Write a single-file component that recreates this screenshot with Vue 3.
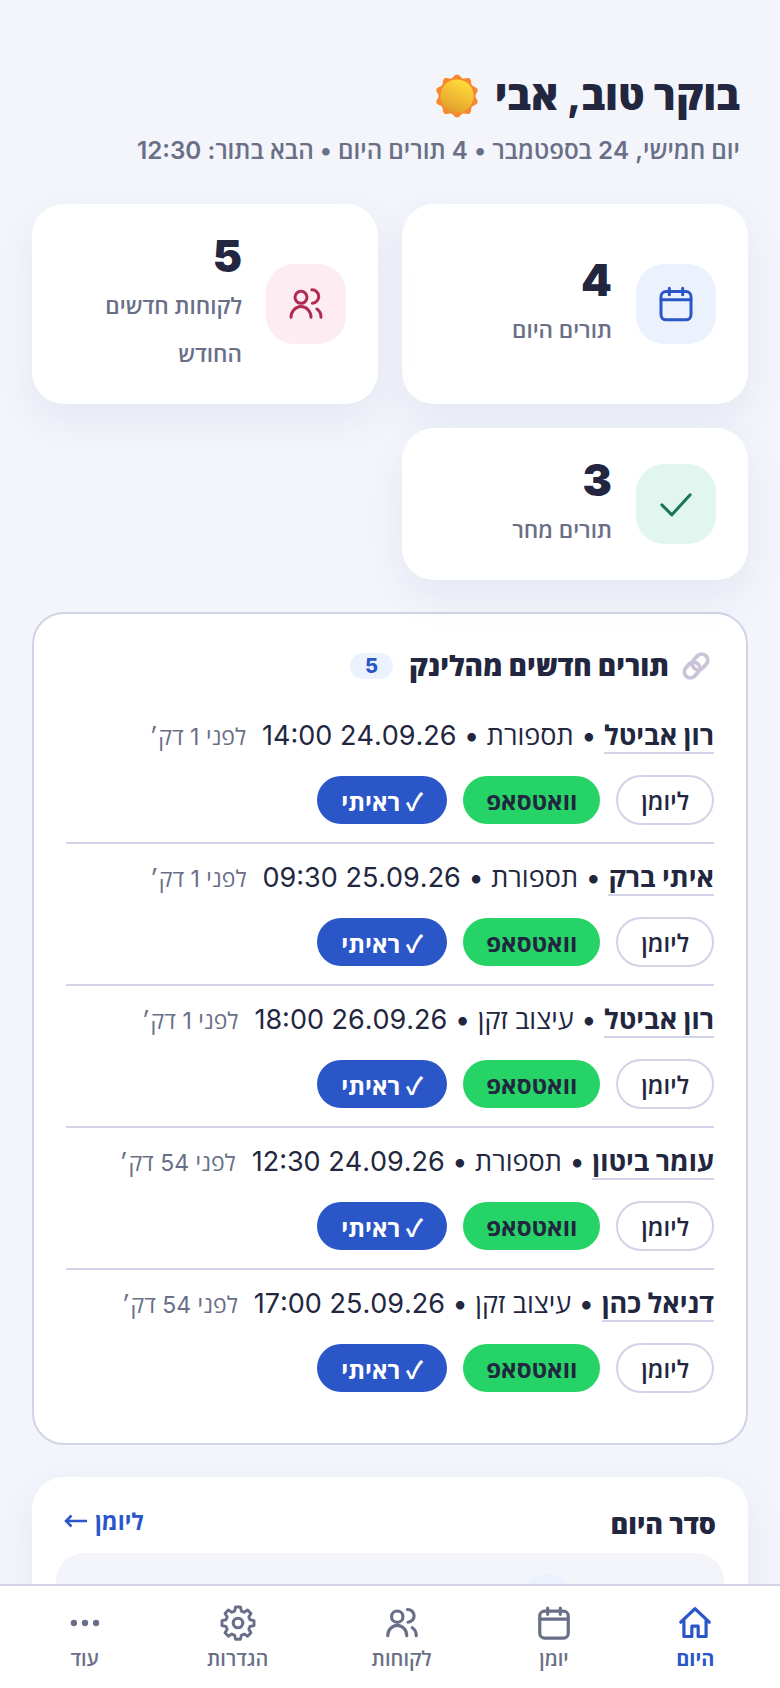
<script setup>
const leads = [
  { name: "רון אביטל", service: "תספורת", when: "24.09.26 14:00", ago: "לפני 1 דק׳" },
  { name: "איתי ברק", service: "תספורת", when: "25.09.26 09:30", ago: "לפני 1 דק׳" },
  { name: "רון אביטל", service: "עיצוב זקן", when: "26.09.26 18:00", ago: "לפני 1 דק׳" },
  { name: "עומר ביטון", service: "תספורת", when: "24.09.26 12:30", ago: "לפני 54 דק׳" },
  { name: "דניאל כהן", service: "עיצוב זקן", when: "25.09.26 17:00", ago: "לפני 54 דק׳" },
];

// scalloped edge of the sun
const sunEdge = Array.from({ length: 120 }, (_, i) => {
  const a = (i / 120) * Math.PI * 2;
  const r = 20 + 1.6 * Math.cos(a * 10);
  const x = 22 + r * Math.sin(a);
  const y = 22 - r * Math.cos(a);
  return `${x.toFixed(2)} ${y.toFixed(2)}`;
}).join(" L");
const sunPath = `M${sunEdge}Z`;
</script>

<template>
  <div class="app" dir="rtl">
    <main class="page">
      <header class="hello">
        <h1>
          <span>בוקר טוב, אבי</span>
          <svg class="sun" viewBox="0 0 44 44" width="44" height="44">
            <defs>
              <linearGradient id="sunFill" x1="0.7" y1="0.1" x2="0.3" y2="0.95">
                <stop offset="0" stop-color="#ffd83a" />
                <stop offset="1" stop-color="#e3a02c" />
              </linearGradient>
            </defs>
            <path fill="#f6882e" :d="sunPath" />
            <circle cx="22" cy="22" r="16.500" fill="url(#sunFill)" />
          </svg>
        </h1>
        <p>יום חמישי, 24 בספטמבר • 4 תורים היום • הבא בתור: 12:30</p>
      </header>

      <section class="stats">
        <div class="stat">
          <div class="stat-icon blue">
            <svg viewBox="0 0 24 24" width="40" height="40">
              <rect x="3" y="4.500" width="18" height="17" rx="3" />
              <path d="M3 9.500h18M8 2.500v4M16 2.500v4" />
            </svg>
          </div>
          <div class="stat-text">
            <strong>4</strong>
            <span>תורים היום</span>
          </div>
        </div>
        <div class="stat">
          <div class="stat-icon pink">
            <svg viewBox="0 0 24 24" width="40" height="40">
              <circle cx="9" cy="8" r="3.600" />
              <path d="M3 20c0-3.600 2.700-6.500 6-6.500s6 2.900 6 6.500M15.500 3.500a3.800 3.800 0 0 1 .3 8M18.500 15c1.600 1 2.500 2.900 2.500 5" />
            </svg>
          </div>
          <div class="stat-text">
            <strong>5</strong>
            <span>לקוחות חדשים החודש</span>
          </div>
        </div>
        <div class="stat">
          <div class="stat-icon green">
            <svg viewBox="0 0 24 24" width="40" height="40">
              <path d="M3.500 12.500l6 6 11-12" />
            </svg>
          </div>
          <div class="stat-text">
            <strong>3</strong>
            <span>תורים מחר</span>
          </div>
        </div>
      </section>

      <section class="leads">
        <h2 class="leads-title">
          <svg viewBox="0 0 30 30" width="30" height="30" class="link-icon">
            <g fill="none" stroke="#cbc3d8" stroke-width="3.800">
              <rect x="13" y="2.500" width="12" height="17" rx="6" transform="rotate(42 19 11)" />
              <rect x="5" y="10.500" width="12" height="17" rx="6" transform="rotate(42 11 19)" />
            </g>
          </svg>
          <span>תורים חדשים מהלינק</span>
          <em class="count">5</em>
        </h2>

        <div v-for="lead in leads" :key="lead.when" class="lead">
          <div class="lead-line">
            <p><b>{{ lead.name }}</b> • {{ lead.service }} • {{ lead.when }}</p>
            <small>{{ lead.ago }}</small>
          </div>
          <div class="lead-actions">
            <button class="ghost">ליומן</button>
            <button class="whatsapp">וואטסאפ</button>
            <button class="seen"><i>✓</i> ראיתי</button>
          </div>
        </div>
      </section>

      <section class="today">
        <div class="today-head">
          <h2>סדר היום</h2>
          <a>
            <span>ליומן</span>
            <svg viewBox="0 0 24 14" width="24" height="14">
              <path d="M23 7H2M7.500 1.500L2 7l5.500 5.500" />
            </svg>
          </a>
        </div>
        <div class="today-panel">
          <div class="today-dot"></div>
        </div>
      </section>
    </main>

    <nav class="tabs">
      <div class="tab active">
        <svg viewBox="0 0 24 24" width="38" height="38">
          <path d="M3 11.500L12 3l9 8.500M5 10v10.500h5V14h4v6.500h5V10" />
        </svg>
        <span>היום</span>
      </div>
      <div class="tab">
        <svg viewBox="0 0 24 24" width="38" height="38">
          <rect x="3" y="4.500" width="18" height="17" rx="3" />
          <path d="M3 9.500h18M8 2.500v4M16 2.500v4" />
        </svg>
        <span>יומן</span>
      </div>
      <div class="tab">
        <svg viewBox="0 0 24 24" width="38" height="38">
          <circle cx="9" cy="8" r="3.600" />
          <path d="M3 20c0-3.600 2.700-6.500 6-6.500s6 2.900 6 6.500M15.500 3.500a3.800 3.800 0 0 1 .3 8M18.500 15c1.600 1 2.500 2.900 2.500 5" />
        </svg>
        <span>לקוחות</span>
      </div>
      <div class="tab">
        <svg viewBox="0 0 24 24" width="38" height="38">
          <circle cx="12" cy="12" r="3" />
          <path d="M10.300 2.500h3.400l.6 2.800 1.900.8 2.400-1.500 2.300 2.400-1.500 2.400.8 1.900 2.800.6v3.400l-2.800.6-.8 1.900 1.500 2.400-2.300 2.400-2.400-1.500-1.900.8-.6 2.800h-3.400l-.6-2.800-1.900-.8-2.400 1.500-2.300-2.400 1.500-2.400-.8-1.900-2.800-.6v-3.400l2.800-.6.8-1.900-1.500-2.400 2.300-2.400 2.400 1.500 1.900-.8z" transform="translate(12 12) scale(.92) translate(-12 -13.500)" />
        </svg>
        <span>הגדרות</span>
      </div>
      <div class="tab">
        <svg viewBox="0 0 24 24" width="38" height="38">
          <circle cx="5" cy="12" r="1" />
          <circle cx="12" cy="12" r="1" />
          <circle cx="19" cy="12" r="1" />
        </svg>
        <span>עוד</span>
      </div>
    </nav>
  </div>
</template>

<style>
html,
body {
  margin: 0;
  background: #f3f5fb;
}
</style>

<style scoped>
.app {
  width: 780px;
  height: 1688px;
  display: flex;
  flex-direction: column;
  overflow: hidden;
  background: #f3f5fb;
  color: #22263f;
  font-family: Inter, "Open Sans", "Liberation Sans", sans-serif;
}
.page {
  flex: 1;
  min-height: 0;
  overflow: hidden;
  padding: 64px 32px 0;
}
.hello {
  padding: 0 8px;
}
.hello h1 {
  margin: 0;
  display: flex;
  align-items: center;
  gap: 16px;
  font-size: 40.500px;
  line-height: 64px;
  font-weight: 800;
}
.sun {
  display: block;
}
.hello p {
  margin: 5px 0 0;
  font-size: 24.200px;
  line-height: 36px;
  font-weight: 600;
  color: #6a6f88;
}
.stats {
  display: grid;
  grid-template-columns: 346px 346px;
  gap: 24px;
  margin-top: 35px;
}
.stat {
  display: flex;
  align-items: center;
  gap: 24px;
  padding: 36px 32px;
  background: #fff;
  border-radius: 32px;
  box-shadow: 0 16px 40px rgba(60, 75, 150, 0.08);
}
.stat-icon {
  flex: none;
  width: 80px;
  height: 80px;
  display: flex;
  align-items: center;
  justify-content: center;
  border-radius: 28px;
}
.stat-icon svg {
  fill: none;
  stroke: currentColor;
  stroke-width: 1.800;
  stroke-linecap: round;
  stroke-linejoin: round;
}
.tab svg {
  fill: none;
  stroke: currentColor;
  stroke-width: 2;
  stroke-linecap: round;
  stroke-linejoin: round;
}
.blue {
  background: #ebf2fe;
  color: #2b56c8;
}
.pink {
  background: #fdecf2;
  color: #b02a52;
}
.green {
  background: #e0f6ef;
  color: #1a7458;
}
.stat-text strong {
  display: block;
  font-size: 44px;
  line-height: 32px;
  font-weight: 900;
}
.stat-text span {
  display: block;
  margin: 10px 0 -10px;
  font-size: 22.500px;
  line-height: 48px;
  font-weight: 600;
  color: #6a6f88;
}
.leads {
  margin-top: 32px;
  padding: 32px 32px 33px;
  background: #fff;
  border: 2px solid #d0d4e6;
  border-radius: 32px;
}
.leads-title {
  margin: 0 0 16px;
  display: flex;
  align-items: center;
  gap: 16px;
  font-size: 28px;
  line-height: 40px;
  font-weight: 800;
}
.link-icon {
  flex: none;
  margin: 0 3px 0 -4px;
}
.count {
  padding: 0 15px;
  height: 26px;
  line-height: 26px;
  font-size: 20px;
  font-style: normal;
  font-weight: 800;
  color: #2b56c8;
  background: #ebf2fe;
  border-radius: 13px;
}
.lead {
  padding: 12px 0 17px;
  border-bottom: 2px solid #d0d4e6;
}
.lead:last-child {
  border-bottom: 0;
}
.lead-line {
  display: flex;
  align-items: center;
  gap: 16px;
  height: 44px;
}
.lead-line p {
  margin: 0;
  font-size: 27px;
  line-height: 36px;
}
.lead-line b {
  font-weight: 700;
  border-bottom: 2px solid #d0d4e6;
}
.lead-line small {
  font-size: 23px;
  color: #6a6f88;
}
.lead-actions {
  display: flex;
  align-items: center;
  gap: 16px;
  margin-top: 17px;
}
.lead-actions button {
  height: 48px;
  padding: 0 23px;
  border: 0;
  border-radius: 24px;
  font: 700 24px Inter, "Open Sans", "Liberation Sans", sans-serif;
  color: #22263f;
}
.lead-actions .ghost {
  height: 50px;
  padding: 0 23px;
  border: 2px solid #d0d4e6;
  border-radius: 25px;
  background: #fff;
  font-weight: 600;
}
.whatsapp {
  background: #25d366;
}
.lead-actions .seen {
  padding: 0 24px;
  background: #2b56c8;
  color: #fff;
}
.seen i {
  font: 700 24px "Noto Sans CJK JP", sans-serif;
}
.today {
  margin-top: 32px;
  padding: 24px;
  background: #fff;
  border-radius: 32px;
  box-shadow: 0 16px 40px rgba(60, 75, 150, 0.08);
}
.today-head {
  display: flex;
  align-items: center;
  justify-content: space-between;
  padding: 0 8px 8px;
  height: 44px;
}
.today-head h2 {
  margin: 0;
  font-size: 27px;
  font-weight: 800;
}
.today-head a {
  display: flex;
  align-items: center;
  gap: 7px;
  margin-top: -4px;
  font-size: 23px;
  font-weight: 700;
  color: #2b56c8;
}
.today-head svg {
  fill: none;
  stroke: currentColor;
  stroke-width: 2.500;
}
.today-panel {
  height: 120px;
  display: flex;
  padding: 21px 149px 0 0;
  background: #f3f5fb;
  border-radius: 28px;
}
.today-dot {
  width: 56px;
  height: 56px;
  border-radius: 50%;
  background: #ebf2fe;
}
.tabs {
  flex: none;
  height: 104px;
  box-sizing: border-box;
  display: flex;
  justify-content: space-around;
  padding: 18px 14px 0;
  background: #fff;
  border-top: 2px solid #d0d4e6;
}
.tab {
  display: flex;
  flex-direction: column;
  align-items: center;
  gap: 3px;
  font-size: 20px;
  line-height: 28px;
  font-weight: 600;
  color: #6a6f88;
}
.tab.active {
  color: #2b56c8;
  font-weight: 700;
}
</style>
